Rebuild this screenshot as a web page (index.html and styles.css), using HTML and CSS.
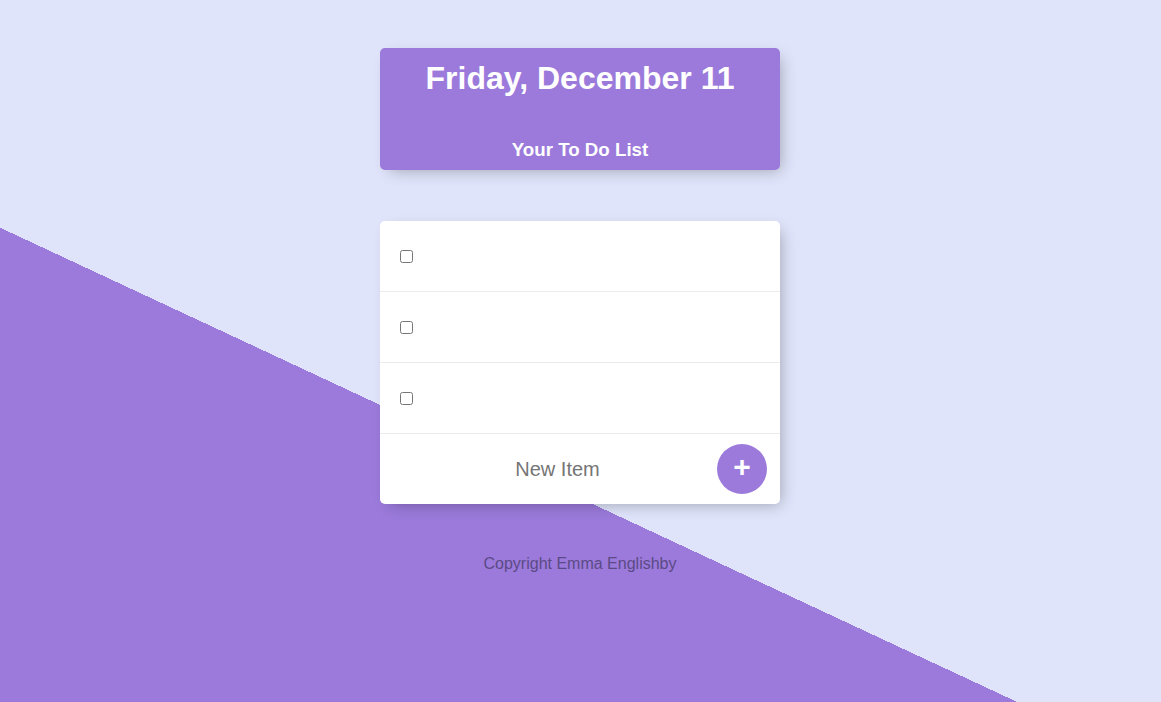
FILE: index.html
```html
<!DOCTYPE html>
<html lang="en">
<head>
<meta charset="utf-8">
<title>To Do List</title>
<link rel="stylesheet" href="styles.css">
</head>
<body>
<main class="page">
  <div class="box heading">
    <h1 class="title">Friday, December 11</h1>
    <h3 class="subtitle">Your To Do List</h3>
  </div>
  <div class="box list">
    <div class="item"><input type="checkbox" class="check"></div>
    <div class="item"><input type="checkbox" class="check"></div>
    <div class="item"><input type="checkbox" class="check"></div>
    <form class="item new-item" onsubmit="return false">
      <input type="text" class="new-input" placeholder="New Item" autocomplete="off">
      <button type="submit" class="add-btn">+</button>
    </form>
  </div>
  <footer class="footer">Copyright Emma Englishby</footer>
</main>
</body>
</html>
```
FILE: styles.css
```css
html {
  height: 100%;
  background-color: #dfe4fa;
  background-image: linear-gradient(205deg, #dfe4fa 697px, #9b7adb 697px);
  background-repeat: no-repeat;
}

body {
  margin: 0;
  min-height: 100%;
  font-family: "Liberation Sans", Arial, Helvetica, sans-serif;
}

.page {
  display: flex;
  flex-direction: column;
  align-items: center;
  padding-top: 48px;
  padding-right: 1px;
}

.box {
  width: 400px;
  border-radius: 5px;
  box-shadow: 5px 5px 15px -5px rgba(0, 0, 0, 0.3);
  box-sizing: border-box;
}

.heading {
  background-color: #9b7adb;
  text-align: center;
  color: #fff;
  padding: 12px 10px 9px;
}

.title {
  margin: 0 0 41px;
  font-size: 32px;
  line-height: 37px;
  font-weight: 700;
}

.subtitle {
  margin: 0;
  font-size: 18.72px;
  line-height: 23px;
  font-weight: 700;
}

.list {
  margin-top: 51px;
  background: #fff;
}

.item {
  display: flex;
  align-items: center;
  min-height: 70px;
  border-bottom: 1px solid #ececec;
  margin: 0;
}

.item:last-child {
  border-bottom: none;
}

.check {
  margin: 0 0 0 20px;
  width: 13px;
  height: 13px;
}

.new-item {
  padding-left: 20px;
}

.new-input {
  width: 315px;
  height: 60px;
  border: none;
  background: transparent;
  text-align: center;
  font-family: "Liberation Sans", Arial, sans-serif;
  font-size: 20px;
  font-weight: 400;
  color: #555;
  padding: 0;
  outline: none;
}

.new-input::placeholder {
  color: #757575;
}

.add-btn {
  margin-left: 2px;
  width: 50px;
  height: 50px;
  border-radius: 50%;
  border: 0;
  background-color: #9b7adb;
  color: #fff;
  font-family: "Liberation Sans", Arial, sans-serif;
  font-size: 30px;
  font-weight: 700;
  line-height: 1;
  padding: 0 0 4px;
  cursor: pointer;
}

.footer {
  margin-top: 51px;
  font-size: 16px;
  line-height: 18px;
  color: #5b4a86;
  text-align: center;
}
```
